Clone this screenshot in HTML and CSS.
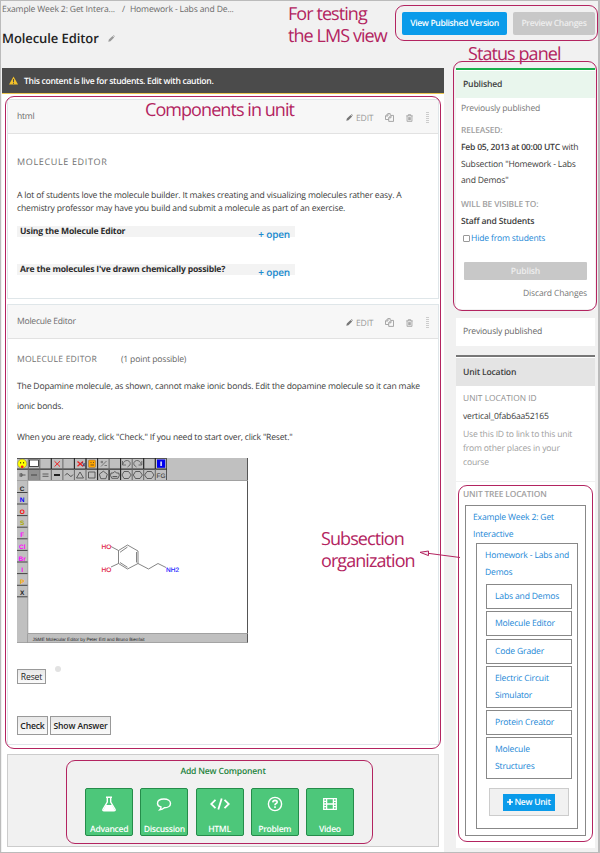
FILE: index.html
```
<!DOCTYPE html>
<html lang="en">
<head>
<meta charset="utf-8">
<title>Molecule Editor</title>
<link rel="stylesheet" href="styles.css">
</head>
<body>
<svg width="0" height="0" class="defs">
  <symbol id="pencil" viewBox="0 0 8 8"><path d="M0.3 7.7L1 5.2 5.2 1 7 2.8 2.8 7zM5.7.6Q6.3 0 7 .7L7.4 1.1Q8 1.7 7.4 2.3z"/></symbol>
  <symbol id="copy" viewBox="0 0 9 9"><g fill="none" stroke="currentColor" stroke-width=".85"><path d="M3.6 6.5H.5V3L2.8.6H5.2V2.2M.6 3H2.9V.8"/><path d="M3.7 4.8L5.9 2.4H8.5V8.4H3.7zM3.8 4.8H6V2.5"/></g></symbol>
  <symbol id="trash" viewBox="0 0 8 9"><g fill="none" stroke="currentColor" stroke-width=".9"><path d="M.3 2H7.7M2.6 1.8V.7H5.4V1.8M1.2 2.2V8.3H6.8V2.2M3 3.5V7M4 3.5V7M5 3.5V7"/></g></symbol>
</svg>
<div class="page">
  <header class="top">
    <div class="heading">
      <nav class="crumbs"><span>Example Week 2: Get Intera...</span><span class="slash">/</span><span class="c2">Homework - Labs and De...</span></nav>
      <h1><span>Molecule Editor</span><svg class="title-pencil"><use href="#pencil"/></svg></h1>
    </div>
    <div class="actions"><a class="btn view">View Published Version</a><a class="btn preview">Preview Changes</a></div>
  </header>
  <div class="columns">
    <main>
      <div class="warn"><svg viewBox="0 0 9 9"><path d="M4.5.4L9 8.6H0z" fill="#f2c029"/><path d="M4.5 3V6M4.5 6.7V7.8" stroke="#4b4b4b"/></svg><span>This content is live for students. Edit with caution.</span></div>
      <section class="card first">
        <div class="card-head"><span class="name">html</span><div class="tools"><svg class="i-pen"><use href="#pencil"/></svg><span class="edit">EDIT</span><svg class="i-copy"><use href="#copy"/></svg><svg class="i-trash"><use href="#trash"/></svg><i class="grip"></i></div></div>
        <div class="card-body">
          <h2 class="wide">MOLECULE EDITOR</h2>
          <p class="intro">A lot of students love the molecule builder. It makes creating and visualizing molecules rather easy. A<br>chemistry professor may have you build and submit a molecule as part of an exercise.</p>
          <div class="fold"><b>Using the Molecule Editor</b><a>+ open</a></div>
          <div class="fold second"><b>Are the molecules I've drawn chemically possible?</b><a>+ open</a></div>
        </div>
      </section>
      <section class="card problem">
        <div class="card-head"><span class="name">Molecule Editor</span><div class="tools"><svg class="i-pen"><use href="#pencil"/></svg><span class="edit">EDIT</span><svg class="i-copy"><use href="#copy"/></svg><svg class="i-trash"><use href="#trash"/></svg><i class="grip"></i></div></div>
        <div class="card-body">
          <div class="ptitle"><h2>MOLECULE EDITOR</h2><span class="points">(1 point possible)</span></div>
          <p class="dop">The Dopamine molecule, as shown, cannot make ionic bonds. Edit the dopamine molecule so it can make<br>ionic bonds.</p>
          <p class="when">When you are ready, click "Check." If you need to start over, click "Reset."</p>
          <svg class="jsme" viewBox="0 0 231 185">
            <rect width="231" height="185" fill="#c0c0c0"/>
            <rect x="11" y="23" width="219" height="152" fill="#fff"/>
            <path d="M230.5 0V185M0 .5H150M149.5 0V22" stroke="#555"/>
            <path d="M0 22.5H231M10.8 23V176M11 175.5H231M10.5 176V185M0 184.6H231" stroke="#999" stroke-width=".8"/>
            <path d="M0 11.2H150" stroke="#333" stroke-width="1.3"/>
            <path d="M11.3 1V22M22.8 1V22M34.3 1V22M45.9 1V22M57.4 1V22M69 1V22M80.6 1V22M92.1 1V22M103.6 1V22M115.2 1V22M126.7 1V22M138.3 1V22" stroke="#666"/>
            <path d="M34.3 0V11M57.4 0V11M69 0V11M80.6 0V22M92.1 12V22M103.6 0V22M126.7 0V11M138.3 0V11" stroke="#222"/>
            <rect x="11.8" y="12" width="10.5" height="10" fill="#909090"/>
            <path d="M14 17H20" stroke="#444"/>
            <circle cx="5.2" cy="5.7" r="4.6" fill="#ff0" stroke="#555" stroke-width=".4"/><path d="M3.6 4v1.5M6.6 4v1.5" stroke="#000" stroke-width=".7"/><circle cx="5.2" cy="8.8" r="1.4" fill="#e22"/>
            <rect x="12.5" y="2" width="9" height="6.5" fill="#fff" stroke="#222" stroke-width=".8"/>
            <path d="M37.5 3.2L43 8.6M43 3.2L37.5 8.6" stroke="#e22"/>
            <path d="M60.5 3.5L66 8.3M66 3.5L60.5 8.3" stroke="#e22" stroke-width="1.3"/><path d="M65 4L68 8.5M66 8.5L68 5" stroke="#336" stroke-width=".8"/>
            <rect x="71.5" y="2" width="7" height="7.5" rx="1" fill="#ffa500" stroke="#864" stroke-width=".5"/><path d="M73.5 4.5h1M76 4.5h1M73.5 7h3.5" stroke="#333" stroke-width=".7"/>
            <path d="M84 8.5L89.5 3M83.5 4h2.5M85 2.8v2.5M87.5 7.5h2.5" stroke="#555" stroke-width=".7"/>
            <g fill="none" stroke="#555" stroke-width=".8"><path d="M105.5 3V7H109M105.8 6.5Q107 2.2 110.5 2.5 114 3.5 113 7L110.5 9M124.8 3V7H121.5M124.3 6.5Q123 2.2 119.5 2.5 116 3.5 117 7L119.5 9"/></g>
            <rect x="140" y="1.5" width="8.2" height="8.3" fill="#00e"/><path d="M144.1 3.5V8" stroke="#fff" stroke-width="1.4"/>
            <g fill="none" stroke="#444" stroke-width=".8"><path d="M2.5 17H8.5M2.5 16L5 15.7 5 18.3 2.5 18M25.5 16H31.5M25.5 18.3H31.5M48 17.5Q50 14 52 17T56 16.5M63 14L66.5 20H59.5zM71.5 14H78V20H71.5zM86.3 13.2L90.3 16.2 88.8 20.7H83.8L82.3 16.2z"/><path d="M97.8 13.5L99.8 15 101.8 15 102.3 17.5 101 20.3H94.8L93.5 17.5 94 15 96 15zM95.5 18.5h4.8"/><path d="M107 13.5H111.5L114.2 17 111.5 20.5H107L105 17zM118.5 13.5H123L125.4 17 123 20.5H118.5L116.3 17zM130 13.5H134.5L137 17 134.5 20.5H130L127.6 17z"/></g>
            <path d="M37 17H43" stroke="#222" stroke-width="2"/>
            <text x="139.5" y="20" font-size="6.5" fill="#333">FG</text>
            <path d="M0 34.5H10.5M0 46H10.5M0 57.6H10.5M0 69.2H10.5M0 80.8H10.5M0 92.4H10.5M0 104H10.5M0 115.6H10.5M0 127.3H10.5M0 138.8H10.5" stroke="#444"/>
            <g font-size="6.5" font-weight="bold" text-anchor="middle"><text x="5.2" y="33" fill="#222">C</text><text x="5.2" y="44.3" fill="#00f">N</text><text x="5.2" y="56" fill="#f00">O</text><text x="5.2" y="67.4" fill="#aa0">S</text><text x="5.2" y="79" fill="#f0f">F</text><text x="5.2" y="90.7" fill="#f0f">Cl</text><text x="5.2" y="102.5" fill="#f0f">Br</text><text x="5.2" y="114" fill="#f0f">I</text><text x="5.2" y="125.5" fill="#fa0">P</text><text x="5.2" y="137" fill="#222">X</text></g>
            <g fill="none" stroke="#666" stroke-width=".8"><path d="M94 88.5L101.5 92.5 110.5 87 121 93V105.5L110.5 111 101.5 105.5V92.5M94 109L101.5 105.5M103 94.3L110.5 89M119.5 94V104.5M110.5 109.3L103 104.5M121 105.5L131.5 111 141 105.5 149 109.5"/></g>
            <g font-size="6.5" stroke-width=".15"><text x="84.5" y="90.6" fill="#e11945" stroke="#e11945">HO</text><text x="84.5" y="113.8" fill="#e11945" stroke="#e11945">HO</text><text x="149" y="113.8" fill="#22f" stroke="#22f">NH2</text></g>
            <text x="15.5" y="183" font-size="4.6" fill="#222" textLength="112">JSME Molecular Editor by Peter Ertl and Bruno Bienfait</text>
          </svg>
          <div class="reset-row"><button class="reset">Reset</button><i class="dot"></i></div>
          <div class="answers"><button class="check">Check</button><button class="show">Show Answer</button></div>
        </div>
      </section>
      <section class="adder">
        <h3>Add New Component</h3>
        <div class="types">
          <a><svg viewBox="0 0 16 16"><path d="M5 1.2H11M6.3 1.5V6L2 13.2Q1.3 14.8 3 14.8H13Q14.7 14.8 14 13.2L9.7 6V1.5" fill="none" stroke="#fff" stroke-width="1.4"/><path d="M5 9H11L14 14.5H2z" fill="#fff"/></svg><span>Advanced</span></a>
          <a><svg viewBox="0 0 16 16"><path d="M8 3C12 3 14.5 5 14.5 7.4S12 11.8 8.4 11.8Q6.5 13.6 3.8 13.8 5 12.6 5 11 1.5 10 1.5 7.4 1.5 3 8 3z" fill="none" stroke="#fff" stroke-width="1.4"/></svg><span>Discussion</span></a>
          <a><svg class="code" viewBox="0 0 20 16"><path d="M5.5 3.8L1.2 8 5.5 12.2M14.5 3.8L18.8 8 14.5 12.2M11.7 2.5L8.3 13.5" fill="none" stroke="#fff" stroke-width="1.8"/></svg><span>HTML</span></a>
          <a><svg viewBox="0 0 16 16"><circle cx="8" cy="8" r="6.6" fill="none" stroke="#fff" stroke-width="1.4"/><path d="M5.8 6.3Q6 4.4 8 4.4 10.2 4.5 10.2 6.2 10.1 7.2 8.8 7.8 8 8.2 8 9.3M8 10.3V12" fill="none" stroke="#fff" stroke-width="1.6"/></svg><span>Problem</span></a>
          <a><svg viewBox="0 0 16 16"><path d="M1.7 2.7H14.3V13.3H1.7zM4.6 2.7V13.3M11.4 2.7V13.3M4.6 8H11.4M1.7 5.3H4.6M1.7 8H4.6M1.7 10.7H4.6M11.4 5.3H14.3M11.4 8H14.3M11.4 10.7H14.3" fill="none" stroke="#fff" stroke-width="1.3"/></svg><span>Video</span></a>
        </div>
      </section>
    </main>
    <aside>
      <section class="panel status">
        <h4>Published</h4>
        <div class="sbody">
          <p class="prev">Previously published</p>
          <h5 class="rel">RELEASED:</h5>
          <p class="release"><b>Feb 05, 2013 at 00:00 UTC</b> with<br>Subsection "Homework - Labs<br>and Demos"</p>
          <h5 class="vis">WILL BE VISIBLE TO:</h5>
          <p class="staff">Staff and Students</p>
          <label class="hide"><i></i><span>Hide from students</span></label>
          <a class="publish">Publish</a>
          <p class="discard">Discard Changes</p>
        </div>
      </section>
      <section class="panel prevbox">Previously published</section>
      <section class="panel location">
        <h4>Unit Location</h4>
        <div class="lbody"><h5>UNIT LOCATION ID</h5><p class="vid">vertical_0fab6aa52165</p><p class="help">Use this ID to link to this unit<br>from other places in your<br>course</p></div>
      </section>
      <section class="panel tree">
        <h5>UNIT TREE LOCATION</h5>
        <div class="outer"><p>Example Week 2: Get<br>Interactive</p>
          <div class="inner"><p>Homework - Labs and<br>Demos</p>
            <ul><li>Labs and Demos</li><li>Molecule Editor</li><li>Code Grader</li><li>Electric Circuit<br>Simulator</li><li>Protein Creator</li><li>Molecule<br>Structures</li></ul>
            <div class="newbox"><a><svg viewBox="0 0 7 7"><path d="M3.5 0V7M0 3.5H7" stroke="#fff" stroke-width="2"/></svg>New Unit</a></div>
          </div>
        </div>
      </section>
    </aside>
  </div>
  <div class="outline o-view"></div><div class="outline o-status"></div><div class="outline o-comp"></div><div class="outline o-add"></div><div class="outline o-tree"></div>
  <div class="note n-view">For testing<br>the LMS view</div>
  <div class="note n-status">Status panel</div>
  <div class="note n-comp">Components in unit</div>
  <div class="note n-tree">Subsection<br>organization</div>
  <svg class="arrow" viewBox="0 0 42 10"><path d="M9 3.3L41 7.5M1 2.3L9.5 1V5.6z" fill="#f5e9ef" stroke="#b32460"/></svg>
</div>
</body>
</html>
```
FILE: styles.css
```
* { box-sizing: border-box; margin: 0; padding: 0; }
body { width: 600px; height: 853px; overflow: hidden; background: #f1f1f1; font: 8.6px/16px "Open Sans", sans-serif; letter-spacing: -.18px; color: #3c3c3c; text-rendering: geometricPrecision; }
.defs { position: absolute; }
svg { display: block; flex: none; fill: currentColor; }
.page { position: relative; width: 600px; height: 853px; border: 1px solid #bbb; border-width: 1px 2px 1px 1px; overflow: hidden; }

.top { display: flex; justify-content: space-between; height: 67px; padding: 0 3px 0 1px; }
.crumbs { display: flex; height: 16px; color: #6a6a6a; letter-spacing: -.15px; }
.slash { margin: 0 5px 0 7px; }
h1 { display: flex; align-items: center; gap: 9px; height: 20px; margin-top: 11px; font-size: 13px; font-weight: 600; letter-spacing: -.08px; color: #222; }
.title-pencil { width: 7px; height: 7px; color: #999; }
.actions { display: flex; gap: 6px; padding-top: 11px; }
.btn { height: 23px; border-radius: 2px; font-weight: 600; line-height: 23px; letter-spacing: -.35px; text-align: center; color: #fff; white-space: nowrap; }
.view { width: 105px; background: #0a9bea; }
.preview { width: 82px; background: #c8c8c8; color: #eee; }

.columns { display: flex; justify-content: space-between; padding: 0 3px 0 1px; }
main { width: 442px; height: 785px; background: #fff; }
.warn { display: flex; align-items: center; gap: 6px; height: 26px; padding-left: 7px; background: #4b4b4b; border-bottom: 1px solid #eac54f; color: #fff; font-weight: 600; letter-spacing: -.32px; }
.warn svg { width: 9px; height: 9px; }
.card { width: 432px; margin-left: 5px; border: 1px solid #dfe6e9; background: #fff; }
.first { height: 200px; margin-top: 5px; }
.problem { height: 441px; margin-top: 5px; }
.card-head { display: flex; justify-content: space-between; height: 34px; padding: 8px 9px 0; background: #f7f7f7; border-bottom: 1px solid #e2e2e2; color: #6c6c6c; }
.name { letter-spacing: -.25px; }
.tools { display: flex; align-items: center; height: 19px; color: #999; }
.i-pen { width: 7px; height: 7px; color: #777; }
.edit { width: 17px; margin: 0 12px 0 3px; }
.i-copy { width: 9px; height: 9px; margin-right: 12px; }
.i-trash { width: 7px; height: 8px; margin-right: 13px; }
.grip { width: 3px; height: 11px; background: repeating-linear-gradient(#ccc 0 1px, transparent 1px 2px); }
.card-body { padding: 0 9px; }
h2 { font-size: 8.6px; font-weight: 400; line-height: 16px; letter-spacing: .2px; color: #707070; }
.wide { margin-top: 20px; font-size: 9px; letter-spacing: .65px; }
.intro { margin-top: 19px; line-height: 13px; white-space: nowrap; }
.fold { display: flex; justify-content: space-between; width: 278px; height: 11px; margin-top: 11px; padding: 0 5px 0 3px; background: #f3f3f3; line-height: 11px; color: #2c2c2c; }
.fold a { color: #1b8bd0; font-weight: 600; font-size: 10px; line-height: 17px; }
.second { margin-top: 27px; }
.ptitle { display: flex; gap: 24px; margin-top: 12px; color: #666; }
.dop { margin-top: 10px; line-height: 19.5px; white-space: nowrap; }
.when { margin-top: 13px; line-height: 16px; letter-spacing: -.2px; white-space: nowrap; }
.jsme { width: 231px; height: 185px; margin-top: 13px; font-family: "Liberation Sans", sans-serif; letter-spacing: 0; }
button { border: 1px solid #999; background: linear-gradient(#e8e8e8, #fafafa); font: 600 8.6px/12px "Open Sans", sans-serif; letter-spacing: -.15px; color: #222; white-space: nowrap; }
.reset-row { display: flex; gap: 9px; margin-top: 23px; height: 19px; }
.reset { width: 29px; height: 15px; margin-top: 3px; font-weight: 400; }
.dot { width: 6px; height: 6px; border-radius: 50%; background: #e2e2e2; }
.answers { display: flex; gap: 2px; margin-top: 31px; }
.answers button { height: 19px; }
.check { width: 31px; }
.show { width: 61px; }
.adder { width: 432px; height: 93px; margin: 9px 0 0 5px; padding-top: 8px; background: #f1f1f1; border: 1px solid #ccc; }
h3 { font-size: 8.6px; font-weight: 600; line-height: 16px; text-align: center; color: #23823c; }
.types { display: flex; justify-content: center; gap: 7.2px; margin: 9px 0 0 -7px; }
.types a { display: flex; flex-direction: column; align-items: center; justify-content: space-between; width: 48px; height: 48px; padding-top: 7px; border: 1px solid #258c4a; border-radius: 2px; background: #4dc77a; color: #fff; font-weight: 600; line-height: 12px; letter-spacing: -.3px; }
.types svg { width: 16px; height: 16px; }
.types .code { width: 20px; }

aside { width: 139px; }
.panel { background: #fff; }
h4 { font-size: 8.6px; font-weight: 600; padding-left: 7px; }
h5 { font-size: 8.4px; font-weight: 600; line-height: 16px; letter-spacing: -.12px; color: #a0a0a0; }
.status { height: 241px; border-top: 2px solid #1aaf4b; }
.status h4 { height: 27px; margin-top: 1px; line-height: 27px; background: #e9f6ed; }
.sbody { padding: 2px 8px 0 5px; white-space: nowrap; }
.prev { color: #777; }
.rel { margin-top: 7px; }
.release { line-height: 16.7px; }
.release b, .staff { font-weight: 600; }
.release b { letter-spacing: -.24px; }
.vis { margin-top: 8px; }
.hide { display: flex; align-items: center; gap: 1px; height: 18px; padding-left: 2px; color: #1b87d6; }
.hide i { width: 7px; height: 7px; border: 1px solid #999; border-radius: 1px; }
.publish { display: block; height: 18px; margin: 15px 0 0 3px; border-radius: 1px; background: #c8c8c8; color: #eee; font-weight: 600; line-height: 18px; text-align: center; }
.discard { margin-top: 5px; text-align: right; color: #777; }
.prevbox { height: 28px; margin-top: 9px; padding-left: 7px; line-height: 27px; color: #666; }
.location { height: 126px; margin-top: 9px; border-top: 2px solid #777; }
.location h4 { height: 28px; margin-top: 1px; line-height: 28px; background: #e4e4e4; }
.lbody { padding: 5px 7px; }
.location h5 { letter-spacing: .02px; font-weight: 400; color: #909090; }
.vid { line-height: 19px; }
.help { margin-top: 1px; line-height: 14px; color: #a0a0a0; white-space: nowrap; }
.tree { height: 366px; margin-top: 1px; padding: 5px 9px 0; }
.tree h5 { margin-left: -2px; letter-spacing: -.15px; }
.tree p, .tree ul { color: #1b87d6; line-height: 16.7px; white-space: nowrap; }
.outer, .inner, .tree li { border: 1px solid #888; }
.outer { width: 121px; height: 331px; margin-top: 2px; padding: 3px 7px 0 10px; }
.outer > p { margin-left: -3px; }
.inner { width: 102px; height: 286px; margin-top: 1px; padding: 3px 5px 0 9px; }
.inner > p { margin-left: -1px; }
.tree ul { display: flex; flex-direction: column; gap: 2.2px; margin-top: 3px; list-style: none; }
.tree li { width: 86px; padding: 3px 0 3.5px 8px; }
.newbox { display: flex; align-items: center; justify-content: center; width: 80px; height: 28px; margin: 9px 0 0 3px; border: 1px solid #ccc; background: #f1f1f1; }
.newbox a { display: flex; align-items: center; justify-content: center; width: 52px; height: 17px; background: #0a9bea; color: #fff; font-weight: 600; letter-spacing: -.3px; white-space: nowrap; }
.newbox svg { width: 6px; height: 6px; margin-right: 1px; }

.outline { position: absolute; border: 1px solid #b32460; border-radius: 9px; pointer-events: none; }
.o-view { left: 394px; top: 4px; width: 203px; height: 36px; }
.o-status { left: 452px; top: 60px; width: 144px; height: 250px; }
.o-comp { left: 4px; top: 95px; width: 436px; height: 653px; }
.o-add { left: 65px; top: 759px; width: 307px; height: 84px; }
.o-tree { left: 457px; top: 484px; width: 135px; height: 357px; }
.note { position: absolute; font: 18px/22px "Open Sans", sans-serif; letter-spacing: -.93px; color: #b32460; white-space: nowrap; }
.n-view { left: 287px; top: 2px; }
.n-status { left: 467px; top: 42px; }
.n-comp { left: 144px; top: 98px; }
.n-tree { left: 320px; top: 527px; }
.arrow { position: absolute; left: 418px; top: 549px; width: 42px; height: 10px; }
```
